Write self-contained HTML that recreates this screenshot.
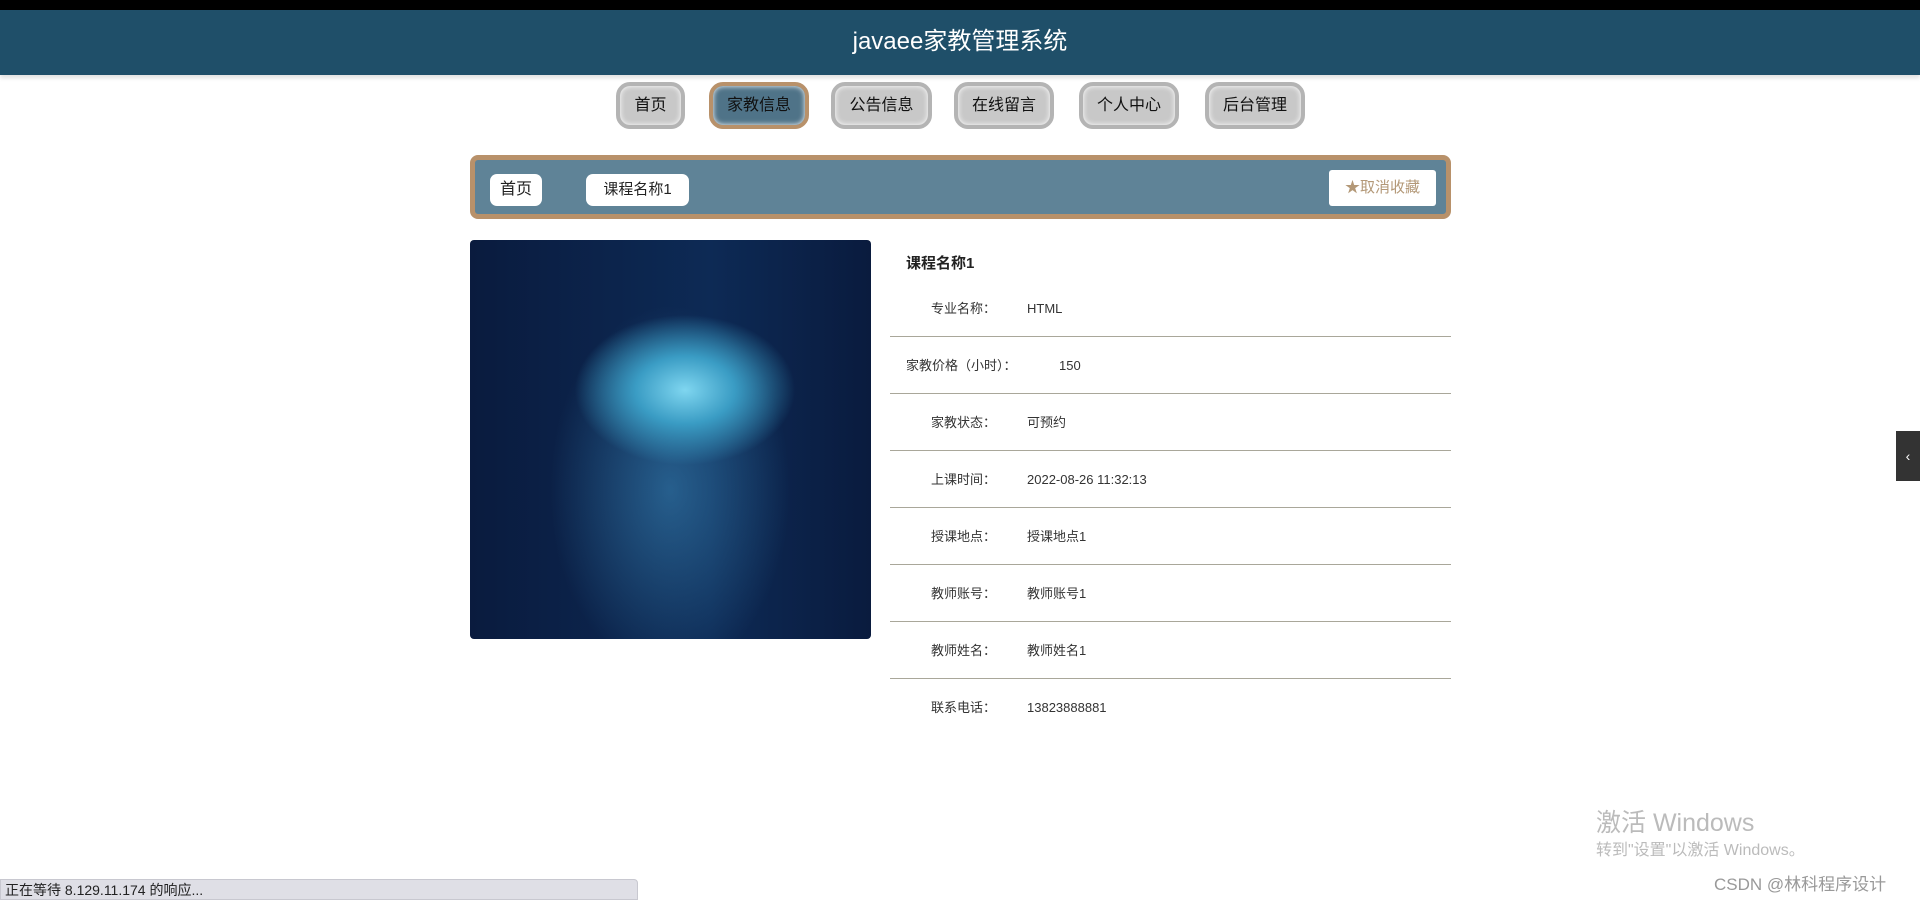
<!DOCTYPE html>
<html><head><meta charset="utf-8"><style>
*{margin:0;padding:0;box-sizing:border-box}
body{width:1920px;height:900px;overflow:hidden;background:#fff;font-family:"Liberation Sans","Noto Sans CJK SC",sans-serif;position:relative}
.top{position:absolute;left:0;top:0;width:1920px;height:10px;background:#000}
.hdr{position:absolute;left:0;top:10px;width:1920px;height:65px;background:#1f4f69;color:#fff;font-size:24px;text-align:center;line-height:63px;box-shadow:0 3px 4px rgba(0,0,0,.12)}
.nav a{position:absolute;top:82px;height:47px;border-radius:14px;background:#c8c8c8;border:4px solid #b4b4b4;box-shadow:inset 0 0 6px #fff;color:#111;font-size:16px;line-height:39px;text-align:center;text-decoration:none}
.nav a.on{background:#4f7388;border-color:#b8916a;color:#111}
.bc{position:absolute;left:470px;top:155px;width:981px;height:64px;background:#5f8397;border:5px solid #b8916a;border-radius:8px}
.pill{position:absolute;background:#fff;border-radius:7px;font-size:16px;color:#222;text-align:center}
.img{position:absolute;left:470px;top:240px;width:401px;height:399px;border-radius:4px;overflow:hidden;background:radial-gradient(ellipse 110px 75px at 215px 150px,#7fd6f0 0%,#3a9cc4 45%,rgba(20,60,110,0) 100%),radial-gradient(ellipse 150px 230px at 200px 250px,rgba(60,140,190,.55),rgba(10,30,70,0) 80%),linear-gradient(90deg,#0a1b3e,#0d2a55 60%,#0a1b3e)}
.t{position:absolute;left:906px;top:252px;font-size:15px;font-weight:bold;color:#222}
.row{position:absolute;left:890px;width:561px;height:57px;border-bottom:1px solid #a9a79a;font-size:13px;color:#333;line-height:16px}
.row span{position:absolute;top:21px}
.row .l{left:41px}
.row .v{left:137px}
</style></head><body>
<div class="top"></div>
<div class="hdr">javaee家教管理系统</div>
<div class="nav">
<a style="left:616px;width:69px">首页</a>
<a class="on" style="left:709px;width:100px">家教信息</a>
<a style="left:831px;width:101px">公告信息</a>
<a style="left:954px;width:100px">在线留言</a>
<a style="left:1079px;width:100px">个人中心</a>
<a style="left:1205px;width:100px">后台管理</a>
</div>
<div class="bc"></div>
<div class="pill" style="left:490px;top:174px;width:52px;height:32px;line-height:32px">首页</div>
<div class="pill" style="left:586px;top:174px;width:103px;height:32px;line-height:32px;font-size:15px">课程名称1</div>
<div class="pill" style="left:1329px;top:170px;width:107px;height:36px;line-height:36px;color:#b39877;border-radius:3px;font-size:15px">★取消收藏</div>
<div class="img"></div>
<div class="t">课程名称1</div>
<div class="row" style="top:280px"><span class="l">专业名称：</span><span class="v">HTML</span></div>
<div class="row" style="top:337px"><span class="l" style="left:16px">家教价格（小时）：</span><span class="v" style="left:169px">150</span></div>
<div class="row" style="top:394px"><span class="l">家教状态：</span><span class="v">可预约</span></div>
<div class="row" style="top:451px"><span class="l">上课时间：</span><span class="v">2022-08-26 11:32:13</span></div>
<div class="row" style="top:508px"><span class="l">授课地点：</span><span class="v">授课地点1</span></div>
<div class="row" style="top:565px"><span class="l">教师账号：</span><span class="v">教师账号1</span></div>
<div class="row" style="top:622px"><span class="l">教师姓名：</span><span class="v">教师姓名1</span></div>
<div class="row" style="top:679px;border:none"><span class="l">联系电话：</span><span class="v">13823888881</span></div>
<div style="position:absolute;left:1896px;top:431px;width:24px;height:50px;background:#333;color:#fff;font-size:14px;line-height:50px;text-align:center">‹</div>
<div style="position:absolute;left:1596px;top:803px;color:#bbb;font-size:25px">激活 Windows</div>
<div style="position:absolute;left:1596px;top:836px;color:#bbb;font-size:16px">转到"设置"以激活 Windows。</div>
<div style="position:absolute;left:1714px;top:870px;color:#999;font-size:17px">CSDN @林科程序设计</div>
<div style="position:absolute;left:0;top:879px;width:638px;height:21px;background:#dfdfe6;border:1px solid #c8c8d0;border-radius:0 4px 0 0;font-size:14px;line-height:20px;padding-left:4px;color:#222">正在等待 8.129.11.174 的响应...</div>
</body></html>
